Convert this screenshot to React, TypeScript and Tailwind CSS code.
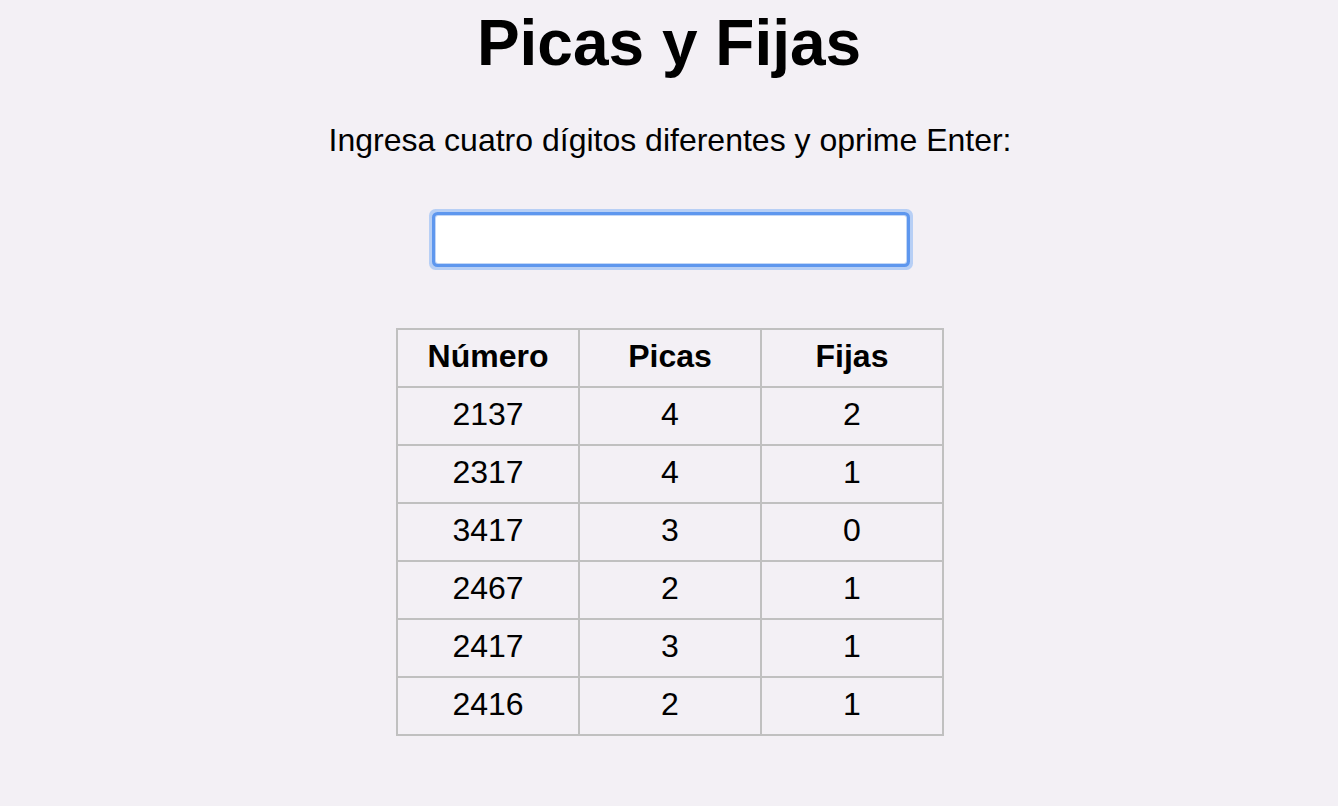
import { useState } from 'react';

const rows = [
  { numero: '2137', picas: 4, fijas: 2 },
  { numero: '2317', picas: 4, fijas: 1 },
  { numero: '3417', picas: 3, fijas: 0 },
  { numero: '2467', picas: 2, fijas: 1 },
  { numero: '2417', picas: 3, fijas: 1 },
  { numero: '2416', picas: 2, fijas: 1 },
];

export default function App() {
  const [guess, setGuess] = useState('');

  return (
    <div className="min-h-screen bg-[#f3f0f5] text-black font-['Liberation_Sans',Arial,sans-serif] flex flex-col items-center">
      <h1 className="pt-[6px] text-[64px] leading-[74px] font-bold">Picas y Fijas</h1>

      <p className="mt-[42px] ml-[2px] text-[32px] leading-[37px]">
        Ingresa cuatro dígitos diferentes y oprime Enter:
      </p>

      <input
        autoFocus
        type="text"
        value={guess}
        onChange={(e) => setGuess(e.target.value)}
        className="mt-[57px] ml-[4px] w-[470px] h-[47px] bg-white rounded-[2px] outline-none text-[32px] px-2 shadow-[0_0_0_1px_#c3d7f6,0_0_0_4px_#5e97ee,0_0_0_7px_#b7cff5]"
      />

      {/* Results */}
      <div className="mt-[65px] ml-[2px] grid grid-cols-[repeat(3,180px)] gap-[2px] p-[2px] bg-[#c0c0c0] text-[32px] leading-[37px]">
        {['Número', 'Picas', 'Fijas'].map((h) => (
          <div key={h} className="h-[56px] bg-[#f3f0f5] flex items-center justify-center pb-[4px] font-bold">
            {h}
          </div>
        ))}
        {rows.map((r) => (
          <div key={r.numero} className="contents">
            <div className="h-[56px] bg-[#f3f0f5] flex items-center justify-center pb-[4px]">{r.numero}</div>
            <div className="h-[56px] bg-[#f3f0f5] flex items-center justify-center pb-[4px]">{r.picas}</div>
            <div className="h-[56px] bg-[#f3f0f5] flex items-center justify-center pb-[4px]">{r.fijas}</div>
          </div>
        ))}
      </div>
    </div>
  );
}
